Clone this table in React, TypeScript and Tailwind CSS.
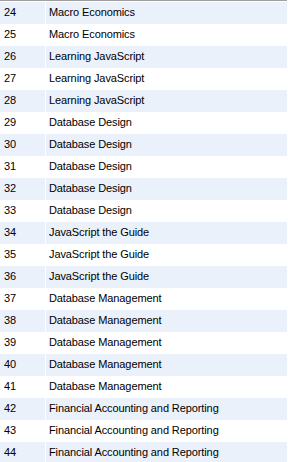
const rows: [number, string][] = [
  [24, 'Macro Economics'],
  [25, 'Macro Economics'],
  [26, 'Learning JavaScript'],
  [27, 'Learning JavaScript'],
  [28, 'Learning JavaScript'],
  [29, 'Database Design'],
  [30, 'Database Design'],
  [31, 'Database Design'],
  [32, 'Database Design'],
  [33, 'Database Design'],
  [34, 'JavaScript the Guide'],
  [35, 'JavaScript the Guide'],
  [36, 'JavaScript the Guide'],
  [37, 'Database Management'],
  [38, 'Database Management'],
  [39, 'Database Management'],
  [40, 'Database Management'],
  [41, 'Database Management'],
  [42, 'Financial Accounting and Reporting'],
  [43, 'Financial Accounting and Reporting'],
  [44, 'Financial Accounting and Reporting'],
];

export default function App() {
  return (
    <div className="w-[288px] h-[462px] overflow-hidden bg-white font-['Liberation_Sans',sans-serif] text-[11px] text-black">
      <div className="w-[287px] border-t border-[#a0a0a0] pt-px">
        {rows.map(([id, title], i) => (
          <div
            key={id}
            className={`flex h-[22px] ${i % 2 === 0 ? 'bg-[#eaf1fb]' : 'bg-white'}`}
          >
            <div className="flex w-[46px] items-center border-r border-white pb-[2px] pl-[4px]">{id}</div>
            <div className="flex items-center pb-[2px] pl-[3px] tracking-[-0.1px]">{title}</div>
          </div>
        ))}
      </div>
    </div>
  );
}
